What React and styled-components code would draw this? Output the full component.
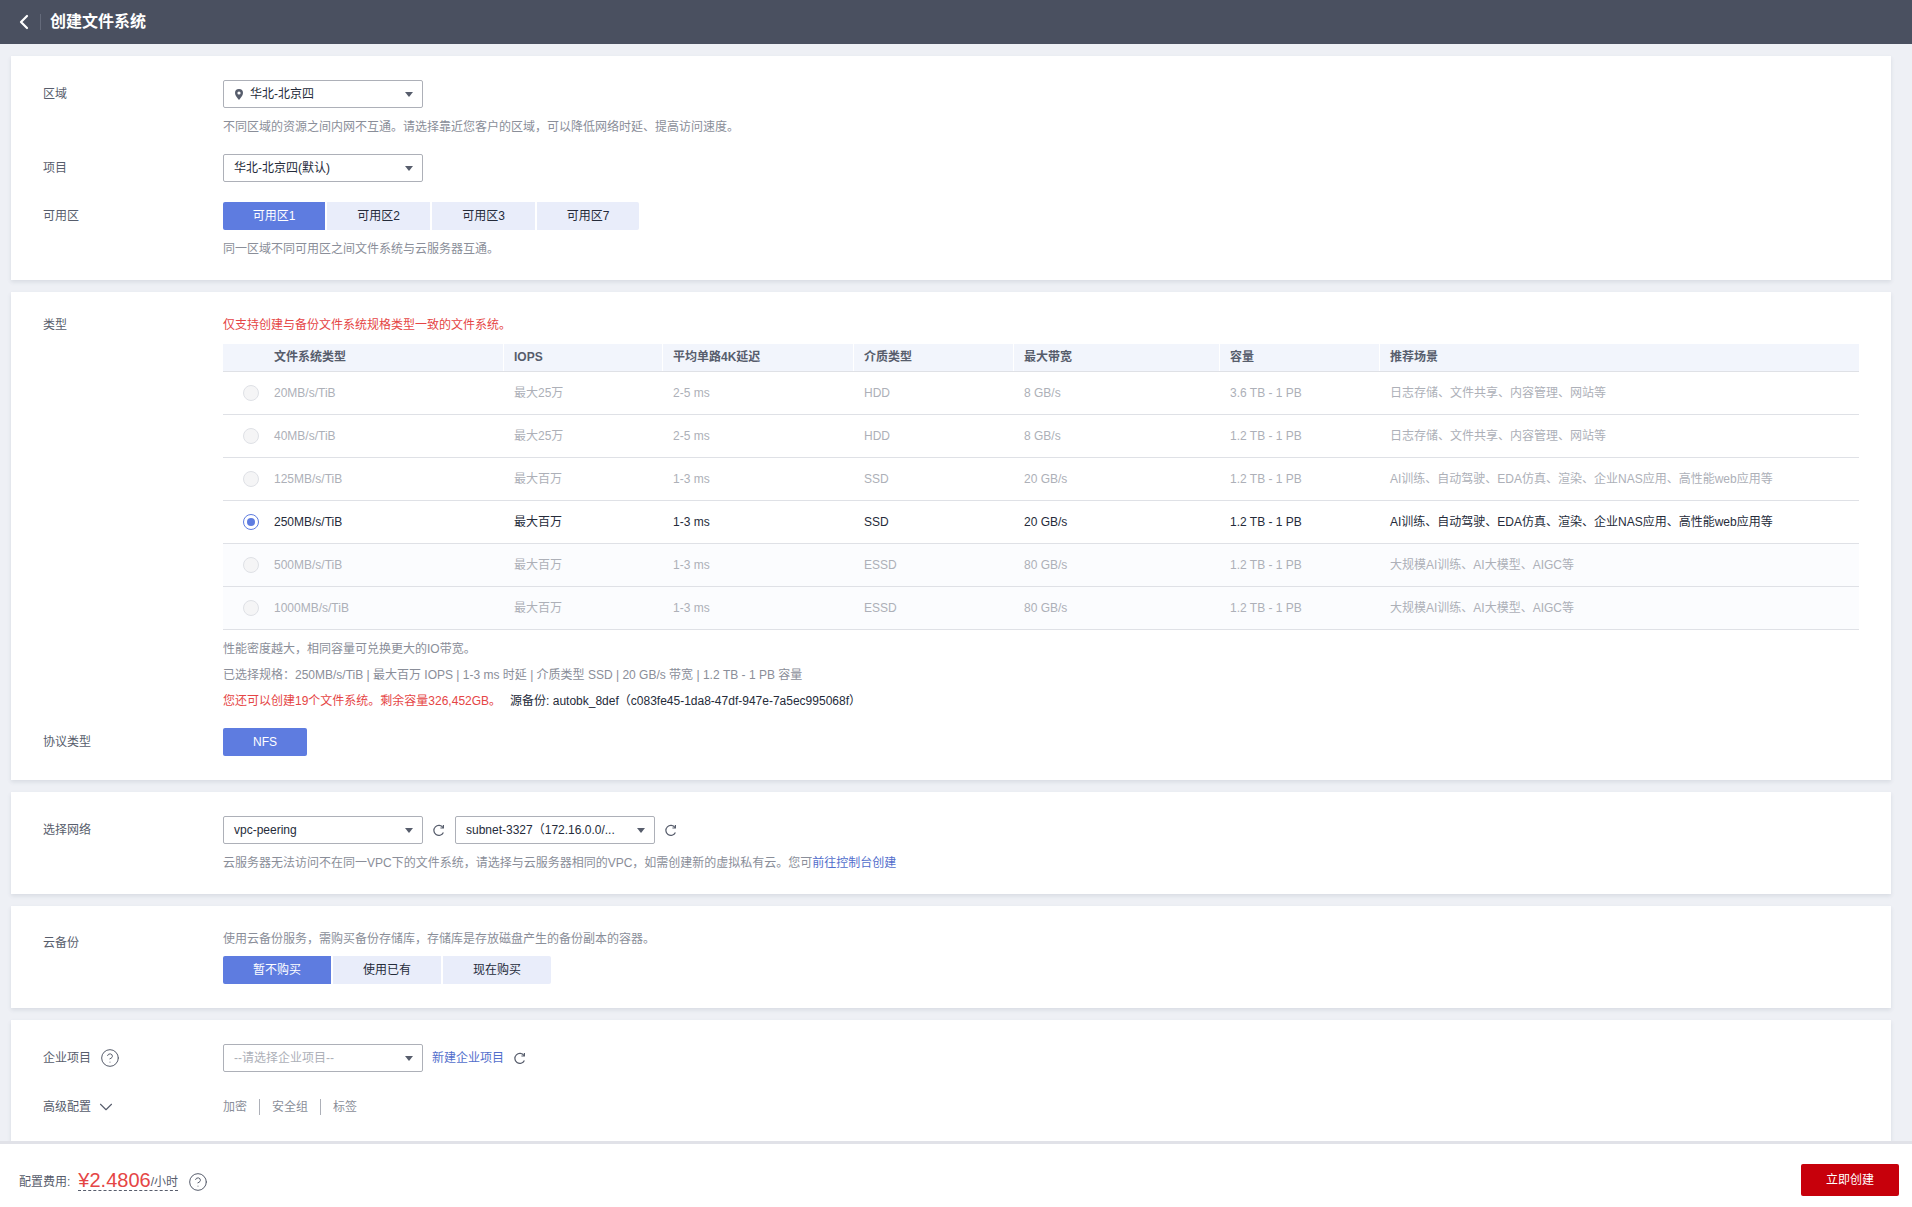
import React from "react";
import styled, { createGlobalStyle } from "styled-components";
import { ChevronDown, ChevronLeft, CircleHelp } from "lucide-react";

const GlobalStyle = createGlobalStyle`
  html, body {
    margin: 0;
    padding: 0;
    height: 100%;
    overflow: hidden;
    font-family: "Liberation Sans", "Noto Sans CJK SC", sans-serif;
    font-size: 12px;
    color: #575d6c;
  }
`;

const Page = styled.div`
  height: 100vh;
  display: flex;
  flex-direction: column;
  background-color: #eef0f5;
`;

const TopBar = styled.div`
  height: 44px;
  flex: none;
  display: flex;
  align-items: center;
  padding-left: 12px;
  background-color: #4a5060;
  color: #fff;
`;

const BackDivider = styled.div`
  width: 1px;
  height: 16px;
  margin: 0 9px 0 4px;
  background-color: #646a7a;
`;

const TopTitle = styled.div`
  font-size: 16px;
  line-height: 20px;
  font-weight: bold;
`;

const Content = styled.div`
  flex: 1;
  min-height: 0;
  overflow: hidden;
  padding: 12px 21px 0 11px;
  display: flex;
  flex-direction: column;
  gap: 12px;
`;

const Card = styled.div`
  flex: none;
  background-color: #fff;
  padding: 24px 32px ${(p) => p.$bottom}px;
  box-shadow: 0 2px 4px rgba(60, 70, 100, 0.12);
`;

const Row = styled.div`
  display: flex;
  align-items: flex-start;
  margin-top: ${(p) => p.$top || 0}px;
`;

const Label = styled.div`
  width: 180px;
  flex: none;
  display: flex;
  align-items: center;
  gap: ${(p) => p.$gap || 0}px;
  line-height: ${(p) => p.$line || 28}px;
  color: #575d6c;
`;

const Body = styled.div`
  flex: 1;
  min-width: 0;
`;

const Hint = styled.div`
  line-height: 18px;
  margin-top: ${(p) => p.$top || 0}px;
  color: ${(p) => p.$color || "#8a8e99"};
`;

const Dark = styled.span`
  color: #252b3a;
  margin-left: 9px;
`;

const Link = styled.a`
  color: #526ecc;
  text-decoration: none;
`;

const SelectBox = styled.div`
  width: 200px;
  height: 28px;
  box-sizing: border-box;
  flex: none;
  display: flex;
  align-items: center;
  gap: 7px;
  padding: 0 9px 0 10px;
  border: 1px solid #adb0b8;
  border-radius: 2px;
  background-color: #fff;
  color: ${(p) => (p.$placeholder ? "#adb0b8" : "#252b3a")};
`;

const SelectText = styled.span`
  flex: 1;
  line-height: 18px;
  white-space: nowrap;
`;

const Caret = styled.span`
  width: 0;
  height: 0;
  border-left: 4px solid transparent;
  border-right: 4px solid transparent;
  border-top: 5px solid #575d6c;
`;

const PinMark = styled.svg`
  flex: none;
  margin-left: 1px;
`;

const Inline = styled.div`
  display: flex;
  align-items: center;
  height: 28px;
`;

const RefreshBtn = styled.span`
  display: flex;
  align-items: center;
  margin: ${(p) => (p.$last ? "0 0 0 9px" : "0 10px 0 9px")};
  color: #575d6c;
`;

const Segments = styled.div`
  display: flex;
  gap: 2px;
`;

const Segment = styled.div`
  width: ${(p) => p.$width}px;
  height: 28px;
  line-height: 28px;
  text-align: center;
  background-color: ${(p) => (p.$active ? "#5e7ce0" : "#e9edfa")};
  color: ${(p) => (p.$active ? "#fff" : "#252b3a")};
  &:first-child {
    border-radius: 2px 0 0 2px;
  }
  &:last-child {
    border-radius: ${(p) => (p.$active ? "2px" : "0 2px 2px 0")};
  }
`;

const SpecTable = styled.div`
  margin-top: 10px;
  width: 1636px;
`;

const HeadRow = styled.div`
  display: grid;
  grid-template-columns: 281px 159px 191px 160px 206px 160px 479px;
  height: 28px;
  box-sizing: border-box;
  border-bottom: 1px solid #dfe1e6;
  background-color: #f2f5fc;
`;

const HeadCell = styled.div`
  line-height: 27px;
  padding-left: ${(p) => p.$pad || 10}px;
  font-weight: bold;
  color: #575d6c;
  border-right: 1px solid #fff;
  &:last-child {
    border-right: 0;
  }
`;

const SpecRow = styled.div`
  display: grid;
  grid-template-columns: 281px 159px 191px 160px 206px 160px 479px;
  height: 43px;
  box-sizing: border-box;
  border-bottom: 1px solid #dfe1e6;
  background-color: ${(p) => (p.$tint ? "#fbfcfe" : "#fff")};
  color: ${(p) => (p.$selected ? "#252b3a" : "#adb0b8")};
`;

const Cell = styled.div`
  display: flex;
  align-items: center;
  padding-left: 10px;
  line-height: 18px;
`;

const TypeCell = styled(Cell)`
  padding-left: 20px;
  gap: 15px;
`;

const Radio = styled.span`
  width: 16px;
  height: 16px;
  box-sizing: border-box;
  flex: none;
  border-radius: 50%;
  border: 1px solid ${(p) => (p.$on ? "#5e7ce0" : "#dfe1e6")};
  background-color: ${(p) => (p.$on ? "#fff" : "#f5f5f6")};
  display: flex;
  align-items: center;
  justify-content: center;
  &::after {
    content: "";
    width: 8px;
    height: 8px;
    border-radius: 50%;
    background-color: #5e7ce0;
    display: ${(p) => (p.$on ? "block" : "none")};
  }
`;

const Notes = styled.div`
  margin-top: 10px;
  display: flex;
  flex-direction: column;
  gap: 8px;
`;

const NfsButton = styled.div`
  width: 84px;
  height: 28px;
  line-height: 28px;
  text-align: center;
  border-radius: 2px;
  background-color: #5e7ce0;
  color: #fff;
`;

const NewLink = styled(Link)`
  margin-left: 9px;
  line-height: 18px;
`;

const Tabs = styled.div`
  display: flex;
  align-items: center;
  height: 28px;
  color: #8a8e99;
`;

const Tab = styled.span`
  padding: 0 12px;
  line-height: 16px;
  border-left: 1px solid #adb0b8;
  &:first-child {
    padding-left: 0;
    border-left: 0;
  }
`;

const Footer = styled.div`
  height: 63px;
  flex: none;
  box-sizing: border-box;
  position: relative;
  display: flex;
  justify-content: space-between;
  align-items: flex-start;
  padding: 20px 13px 0 19px;
  background-color: #fff;
  box-shadow: 0 -3px 0 #e1e2e8;
`;

const Fee = styled.div`
  display: flex;
  align-items: flex-end;
  height: 27px;
`;

const FeeLabel = styled.span`
  line-height: 18px;
`;

const FeeValue = styled.span`
  display: flex;
  align-items: flex-end;
  margin-left: 8px;
  border-bottom: 1px dashed #575d6c;
  height: 26px;
`;

const Price = styled.span`
  font-size: 20px;
  line-height: 20px;
  color: #e54545;
`;

const Unit = styled.span`
  line-height: 18px;
  margin-bottom: -1px;
`;

const FeeHelp = styled.span`
  display: flex;
  margin: 0 0 -1px 10px;
`;

const CreateButton = styled.div`
  width: 98px;
  height: 32px;
  line-height: 32px;
  text-align: center;
  border-radius: 2px;
  background-color: #c7000b;
  color: #fff;
`;

const specs = [
  ["20MB/s/TiB", "最大25万", "2-5 ms", "HDD", "8 GB/s", "3.6 TB - 1 PB", "日志存储、文件共享、内容管理、网站等"],
  ["40MB/s/TiB", "最大25万", "2-5 ms", "HDD", "8 GB/s", "1.2 TB - 1 PB", "日志存储、文件共享、内容管理、网站等"],
  ["125MB/s/TiB", "最大百万", "1-3 ms", "SSD", "20 GB/s", "1.2 TB - 1 PB", "AI训练、自动驾驶、EDA仿真、渲染、企业NAS应用、高性能web应用等"],
  ["250MB/s/TiB", "最大百万", "1-3 ms", "SSD", "20 GB/s", "1.2 TB - 1 PB", "AI训练、自动驾驶、EDA仿真、渲染、企业NAS应用、高性能web应用等"],
  ["500MB/s/TiB", "最大百万", "1-3 ms", "ESSD", "80 GB/s", "1.2 TB - 1 PB", "大规模AI训练、AI大模型、AIGC等"],
  ["1000MB/s/TiB", "最大百万", "1-3 ms", "ESSD", "80 GB/s", "1.2 TB - 1 PB", "大规模AI训练、AI大模型、AIGC等"],
];

const PinIcon = () => (
  <PinMark width="8" height="11" viewBox="0 0 8 11">
    <path
      fill="#575d6c"
      fillRule="evenodd"
      d="M4 0a4 4 0 0 1 4 4c0 2.6-2.6 5.4-4 7C2.6 9.4 0 6.6 0 4a4 4 0 0 1 4-4zm0 2.4a1.6 1.6 0 1 0 0 3.2 1.6 1.6 0 0 0 0-3.2z"
    />
  </PinMark>
);

function Select({ children, placeholder, pin }) {
  return (
    <SelectBox $placeholder={placeholder}>
      {pin && <PinIcon />}
      <SelectText>{children}</SelectText>
      <Caret />
    </SelectBox>
  );
}

// open "C" with a small hook at the top right, like the console's refresh icon
const Refresh = ({ last }) => (
  <RefreshBtn $last={last}>
    <svg width="13" height="13" viewBox="0 0 13 13" fill="none" stroke="currentColor" strokeWidth="1.2">
      <path d="M11 3.6A5 5 0 1 0 11.4 8.6" />
      <path d="M11.4 1v3h-3" />
    </svg>
  </RefreshBtn>
);

function App() {
  return (
    <Page>
      <GlobalStyle />
      <TopBar>
        <ChevronLeft size={24} strokeWidth={2.2} />
        <BackDivider />
        <TopTitle>创建文件系统</TopTitle>
      </TopBar>
      <Content>
        <Card $bottom={22}>
          <Row>
            <Label>区域</Label>
            <Body>
              <Select pin>华北-北京四</Select>
              <Hint $top={10}>不同区域的资源之间内网不互通。请选择靠近您客户的区域，可以降低网络时延、提高访问速度。</Hint>
            </Body>
          </Row>
          <Row $top={18}>
            <Label>项目</Label>
            <Select>华北-北京四(默认)</Select>
          </Row>
          <Row $top={20}>
            <Label>可用区</Label>
            <Body>
              <Segments>
                <Segment $width={102} $active>可用区1</Segment>
                <Segment $width={103}>可用区2</Segment>
                <Segment $width={103}>可用区3</Segment>
                <Segment $width={102}>可用区7</Segment>
              </Segments>
              <Hint $top={10}>同一区域不同可用区之间文件系统与云服务器互通。</Hint>
            </Body>
          </Row>
        </Card>

        <Card $bottom={24}>
          <Row>
            <Label $line={18}>类型</Label>
            <Body>
              <Hint $color="#e54545">仅支持创建与备份文件系统规格类型一致的文件系统。</Hint>
              <SpecTable>
                <HeadRow>
                  <HeadCell $pad={51}>文件系统类型</HeadCell>
                  <HeadCell>IOPS</HeadCell>
                  <HeadCell>平均单路4K延迟</HeadCell>
                  <HeadCell>介质类型</HeadCell>
                  <HeadCell>最大带宽</HeadCell>
                  <HeadCell>容量</HeadCell>
                  <HeadCell>推荐场景</HeadCell>
                </HeadRow>
                {specs.map((row, i) => (
                  <SpecRow key={row[0]} $selected={i === 3} $tint={i > 3}>
                    <TypeCell>
                      <Radio $on={i === 3} />
                      {row[0]}
                    </TypeCell>
                    {row.slice(1).map((value, j) => (
                      <Cell key={j}>{value}</Cell>
                    ))}
                  </SpecRow>
                ))}
              </SpecTable>
              <Notes>
                <Hint>性能密度越大，相同容量可兑换更大的IO带宽。</Hint>
                <Hint>已选择规格：250MB/s/TiB | 最大百万 IOPS | 1-3 ms 时延 | 介质类型 SSD | 20 GB/s 带宽 | 1.2 TB - 1 PB 容量</Hint>
                <Hint $color="#e54545">
                  您还可以创建19个文件系统。剩余容量326,452GB。
                  <Dark>源备份: autobk_8def（c083fe45-1da8-47df-947e-7a5ec995068f）</Dark>
                </Hint>
              </Notes>
            </Body>
          </Row>
          <Row $top={18}>
            <Label>协议类型</Label>
            <NfsButton>NFS</NfsButton>
          </Row>
        </Card>

        <Card $bottom={22}>
          <Row>
            <Label>选择网络</Label>
            <Body>
              <Inline>
                <Select>vpc-peering</Select>
                <Refresh />
                <Select>subnet-3327（172.16.0.0/...</Select>
                <Refresh last />
              </Inline>
              <Hint $top={10}>
                云服务器无法访问不在同一VPC下的文件系统，请选择与云服务器相同的VPC，如需创建新的虚拟私有云。您可<Link>前往控制台创建</Link>
              </Hint>
            </Body>
          </Row>
        </Card>

        <Card $bottom={24}>
          <Row>
            <Label $line={26}>云备份</Label>
            <Body>
              <Hint>使用云备份服务，需购买备份存储库，存储库是存放磁盘产生的备份副本的容器。</Hint>
              <Row $top={8}>
                <Segments>
                  <Segment $width={108} $active>暂不购买</Segment>
                  <Segment $width={108}>使用已有</Segment>
                  <Segment $width={108}>现在购买</Segment>
                </Segments>
              </Row>
            </Body>
          </Row>
        </Card>

        <Card $bottom={20}>
          <Row>
            <Label $gap={9}>
              企业项目
              <CircleHelp size={20} strokeWidth={1.2} />
            </Label>
            <Inline>
              <Select placeholder>--请选择企业项目--</Select>
              <NewLink>新建企业项目</NewLink>
              <Refresh last />
            </Inline>
          </Row>
          <Row $top={21}>
            <Label $gap={4}>
              高级配置
              <ChevronDown size={22} strokeWidth={1.2} />
            </Label>
            <Tabs>
              <Tab>加密</Tab>
              <Tab>安全组</Tab>
              <Tab>标签</Tab>
            </Tabs>
          </Row>
        </Card>
      </Content>
      <Footer>
        <Fee>
          <FeeLabel>配置费用:</FeeLabel>
          <FeeValue>
            <Price>¥2.4806</Price>
            <Unit>/小时</Unit>
          </FeeValue>
          <FeeHelp>
            <CircleHelp size={20} strokeWidth={1.2} />
          </FeeHelp>
        </Fee>
        <CreateButton>立即创建</CreateButton>
      </Footer>
    </Page>
  );
}

export default App;
